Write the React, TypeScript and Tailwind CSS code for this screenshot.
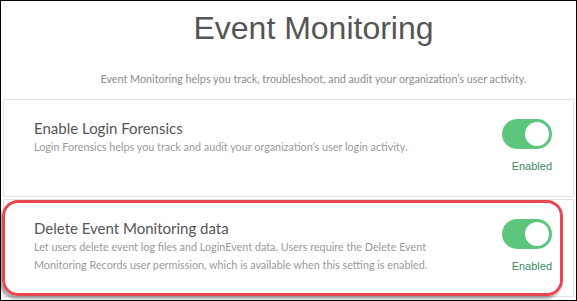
import React from "react";

function Toggle() {
  return (
    <div className="w-[50px] h-[30px] rounded-full bg-[#5bc67c] flex items-center justify-end pr-[3px]">
      <div className="w-[24px] h-[24px] rounded-full bg-white" />
    </div>
  );
}

function Card({
  title,
  desc,
  highlight,
}: {
  title: string;
  desc: React.ReactNode;
  highlight?: boolean;
}) {
  return (
    <div className="relative h-[98px] border border-[#e3e3e3] bg-white flex justify-between pl-[30px] pr-[21px]">
      <div className="pt-[21px] flex flex-col">
        <div className="text-[15px] leading-[15px] text-[#555555] font-['Lato',sans-serif]">
          {title}
        </div>
        <div className="mt-[2px] text-[10.8px] leading-[18px] text-[#9a9a9a] font-['Lato',sans-serif] w-[410px]">
          {desc}
        </div>
      </div>
      <div className="pt-[19px] flex flex-col items-end">
        <Toggle />
        <div className="mt-[11px] text-[11px] leading-[12px] text-[#3b8a5c] font-['Liberation_Sans',Arial,sans-serif]">
          Enabled
        </div>
      </div>
      {highlight && (
        <div className="absolute left-[-2px] top-[0px] w-[561px] h-[96px] rounded-[16px] border-[3px] border-[#ea464d] shadow-[-2px_3px_3px_rgba(0,0,0,0.35)]" />
      )}
    </div>
  );
}

export default function App() {
  return (
    <div className="w-[577px] h-[301px] border border-black bg-white overflow-hidden">
      <div className="pl-[50px] flex flex-col items-center">
        <h1 className="mt-[11px] text-[32px] leading-[32px] text-[#555555] font-['Liberation_Sans',Arial,sans-serif]">
          Event Monitoring
        </h1>
        <p className="mt-[27px] text-[10.8px] leading-[16px] text-[#8c8c8c] font-['Lato',sans-serif]">
          Event Monitoring helps you track, troubleshoot, and audit your organization’s user activity.
        </p>
      </div>
      <div className="mx-[2px] mt-[12px] flex flex-col gap-[2px]">
        <Card
          title="Enable Login Forensics"
          desc="Login Forensics helps you track and audit your organization’s user login activity."
        />
        <Card
          highlight
          title="Delete Event Monitoring data"
          desc="Let users delete event log files and LoginEvent data. Users require the Delete Event Monitoring Records user permission, which is available when this setting is enabled."
        />
      </div>
    </div>
  );
}
